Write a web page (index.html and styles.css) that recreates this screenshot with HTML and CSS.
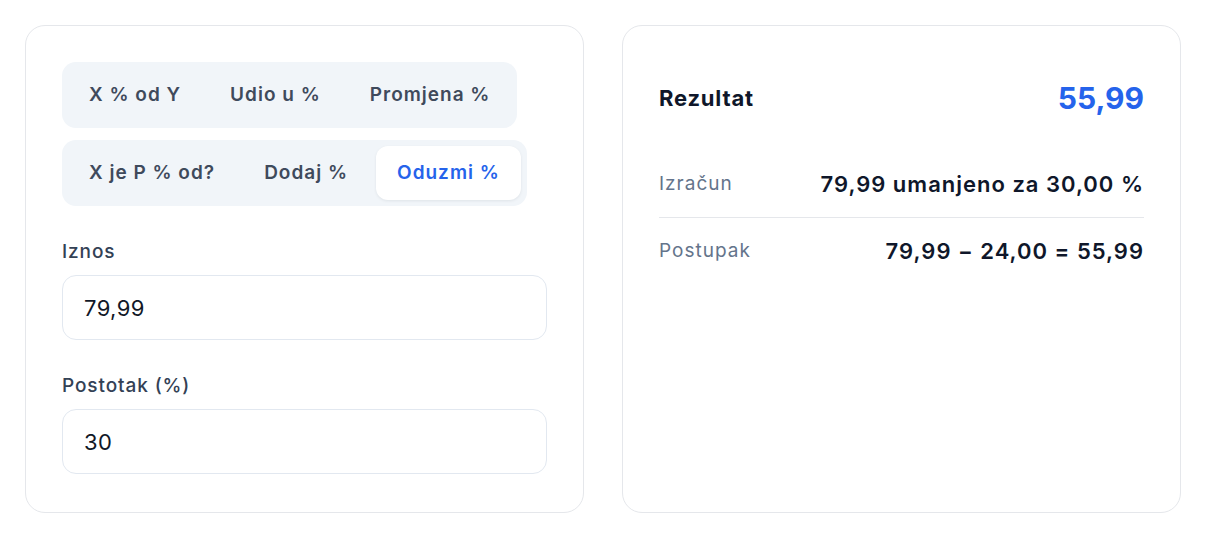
FILE: index.html
```html
<!DOCTYPE html>
<html lang="hr">
<head>
    <meta charset="UTF-8">
    <meta name="viewport" content="width=device-width, initial-scale=1.0">
    <title>Kalkulator postotka</title>
    <link rel="stylesheet" href="styles.css">
</head>
<body>
    <div class="layout">
        <div class="card">
            <div class="tabs">
                <div class="tab">X % od Y</div>
                <div class="tab">Udio u %</div>
                <div class="tab">Promjena %</div>
            </div>
            <div class="tabs">
                <div class="tab">X je P % od?</div>
                <div class="tab">Dodaj %</div>
                <div class="tab active">Oduzmi %</div>
            </div>
            <label class="field">
                <span class="label">Iznos</span>
                <input class="input" type="text" value="79,99">
            </label>
            <label class="field">
                <span class="label">Postotak (%)</span>
                <input class="input" type="text" value="30">
            </label>
        </div>
        <div class="card">
            <div class="result">
                <span class="result-title">Rezultat</span>
                <span class="result-value">55,99</span>
            </div>
            <div class="row">
                <span class="row-label">Izračun</span>
                <span class="row-value">79,99 umanjeno za 30,00 %</span>
            </div>
            <div class="row">
                <span class="row-label">Postupak</span>
                <span class="row-value">79,99 − 24,00 = 55,99</span>
            </div>
        </div>
    </div>
</body>
</html>
```
FILE: styles.css
```css
body {
    margin: 0;
    background: #fff;
    font-family: Inter, "Noto Sans", sans-serif;
    color: #0f172a;
}

.layout {
    display: grid;
    grid-template-columns: 559px 559px;
    gap: 38px;
    padding: 25px;
}

.card {
    height: 488px;
    box-sizing: border-box;
    border: 1px solid #e5e7eb;
    border-radius: 20px;
    padding: 36px;
}

.tabs {
    display: flex;
    width: fit-content;
    background: #f1f5f9;
    border-radius: 14px;
    padding: 6px;
    margin-bottom: 12px;
}

.tab {
    padding: 0 21px;
    height: 54px;
    line-height: 54px;
    font-size: 19px;
    font-weight: 600;
    letter-spacing: 1px;
    color: #3f4a5c;
    border-radius: 12px;
}

.tab + .tab {
    margin-left: 7px;
}

.tab.active {
    background: #fff;
    color: #2563eb;
    box-shadow: 0 1px 3px rgba(15, 23, 42, 0.08);
}

.field {
    display: block;
    margin-top: 33px;
}

.label {
    display: block;
    font-size: 19px;
    font-weight: 500;
    letter-spacing: 0.9px;
    line-height: 26px;
    color: #334155;
    margin-bottom: 10px;
}

.input {
    display: block;
    width: 100%;
    box-sizing: border-box;
    height: 65px;
    border: 1px solid #e2e8f0;
    border-radius: 14px;
    padding: 0 21px;
    font-family: inherit;
    font-size: 22px;
    letter-spacing: 0.4px;
    color: #111827;
    background: #fff;
    outline: none;
}

.result {
    display: flex;
    justify-content: space-between;
    align-items: center;
    height: 72px;
    margin-bottom: 17px;
}

.result-title {
    font-size: 22px;
    font-weight: 700;
    letter-spacing: 0.8px;
    color: #0f172a;
}

.result-value {
    font-size: 30px;
    font-weight: 700;
    color: #2563eb;
}

.row {
    display: flex;
    justify-content: space-between;
    align-items: center;
    padding: 20px 0;
    line-height: 26px;
}

.row + .row {
    border-top: 1px solid #e5e7eb;
}

.row-label {
    font-size: 19px;
    letter-spacing: 1px;
    color: #64748b;
}

.row-value {
    font-size: 22px;
    font-weight: 600;
    letter-spacing: 1px;
    color: #0f172a;
}
```
